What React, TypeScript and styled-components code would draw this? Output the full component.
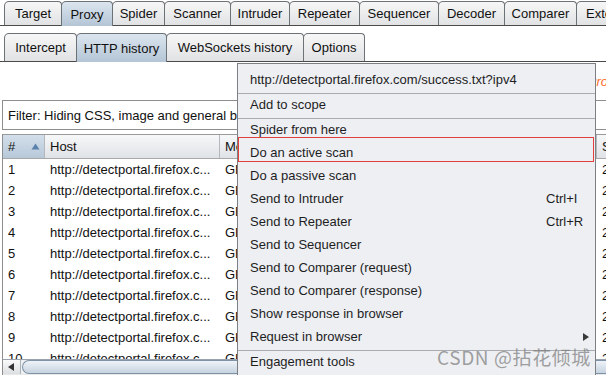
import React from "react";
import styled, { createGlobalStyle, css } from "styled-components";

const Global = createGlobalStyle`
  html, body { margin: 0; padding: 0; background: #ffffff; }
  body { width: 606px; height: 375px; overflow: hidden; font-family: "Liberation Sans", Arial, sans-serif; }
  #root { width: 606px; height: 375px; }
`;

const Window = styled.div`
  position: relative;
  width: 606px;
  height: 375px;
  overflow: hidden;
  background: #ffffff;
  display: flex;
  flex-direction: column;
  font-size: 13px;
  color: #111;
`;

const TabStrip = styled.div<{ $top: number }>`
  display: flex;
  align-items: flex-end;
  padding: ${(p) => p.$top}px 0 0 4px;
  border-bottom: 1px solid #4a4a4a;
  flex: none;
  white-space: nowrap;
`;

const Tab = styled.div<{ $w: number; $h: number; $active?: boolean }>`
  flex: none;
  box-sizing: border-box;
  width: ${(p) => p.$w}px;
  height: ${(p) => p.$h}px;
  margin-right: -1px;
  border: 1px solid #6d7277;
  border-bottom: none;
  border-radius: 5px 4px 0 0;
  display: flex;
  align-items: center;
  justify-content: center;
  font-size: 13px;
  color: #111;
  background: linear-gradient(#f7f7f7, #e1e2e4);
  ${(p) =>
    p.$active &&
    css`
      background: linear-gradient(#dbe5ee, #b4c5d6);
      height: ${p.$h + 1}px;
      margin-bottom: -1px;
      position: relative;
      z-index: 1;
    `}
`;

const Content = styled.div`
  flex: 1;
  display: flex;
  flex-direction: column;
  min-height: 0;
`;

const Banner = styled.div`
  height: 38px;
  flex: none;
  display: flex;
  justify-content: flex-end;
  align-items: center;
  padding-top: 1px;
  box-sizing: border-box;
  margin-right: -2px;
`;

const ProLink = styled.span`
  color: #ff6a2a;
  font-style: italic;
  font-size: 13px;
`;

const FilterBar = styled.div`
  flex: none;
  box-sizing: border-box;
  height: 30px;
  margin-left: 2px;
  margin-right: -10px;
  border: 1px solid #8e8e8e;
  display: flex;
  align-items: center;
  padding-left: 5px;
  white-space: nowrap;
  color: #111;
`;

const Table = styled.div`
  flex: 1;
  min-height: 0;
  margin-top: 4px;
  margin-left: 2px;
  border-left: 1px solid #8e8e8e;
  display: flex;
  flex-direction: column;
`;

const cols = "42px 175px 60px 317px 80px";

const HeaderRow = styled.div`
  flex: none;
  box-sizing: border-box;
  height: 25px;
  display: grid;
  grid-template-columns: ${cols};
  border-top: 1px solid #9a9a9a;
  border-bottom: 1px solid #a8a8a8;
  background: linear-gradient(#f7f8f9, #dfe2e6);
`;

const HeaderCell = styled.div<{ $sorted?: boolean }>`
  box-sizing: border-box;
  display: flex;
  align-items: center;
  justify-content: space-between;
  padding: 0 4px 0 5px;
  border-right: 1px solid #b5b8bc;
  white-space: nowrap;
  overflow: hidden;
  color: #111;
  ${(p) =>
    p.$sorted &&
    css`
      background: linear-gradient(#d3dfea, #b7c8d9);
    `}
`;

const Rows = styled.div`
  flex: 1;
  min-height: 0;
  overflow: hidden;
`;

const Row = styled.div`
  display: grid;
  grid-template-columns: ${cols};
  height: 21px;
  align-items: center;
`;

const Cell = styled.div`
  padding: 0 5px;
  white-space: nowrap;
  overflow: hidden;
  color: #111;
`;

const HScroll = styled.div`
  flex: none;
  height: 14px;
  display: flex;
  border-top: 1px solid #9aa3ad;
  border-bottom: 1px solid #e8e8e8;
  background: #eef0f2;
`;

const ScrollButton = styled.div`
  width: 17px;
  flex: none;
  display: flex;
  align-items: center;
  justify-content: center;
  background: linear-gradient(#fafafa, #dcdfe2);
  border-right: 1px solid #aab2ba;
`;

const Thumb = styled.div`
  flex: 1;
  margin-left: 1px;
  border: 1px solid #7f93a8;
  border-right: none;
  border-radius: 9px 0 0 9px;
  background: linear-gradient(#eef3f8, #c6d3e0);
`;

const Menu = styled.div`
  position: absolute;
  left: 237px;
  top: 63px;
  width: 359px;
  height: 330px;
  box-sizing: border-box;
  border: 1px solid #7c7f84;
  background: #edeff3;
  display: flex;
  flex-direction: column;
  z-index: 5;
`;

const MenuItem = styled.div<{ $focus?: boolean; $header?: boolean }>`
  position: relative;
  flex: none;
  display: flex;
  align-items: center;
  height: 22px;
  line-height: 22px;
  padding: 0 0 1px 12px;
  color: #1e1e1e;
  font-size: 13px;
  white-space: nowrap;
  ${(p) =>
    p.$header &&
    css`
      padding-top: 5px;
    `}
  ${(p) =>
    p.$focus &&
    css`
      &::after {
        content: "";
        position: absolute;
        left: 0;
        right: 1px;
        top: -5px;
        bottom: 3px;
        border: 1px solid #e2403b;
      }
    `}
`;

const Label = styled.span`
  flex: 1;
`;

const Accel = styled.span`
  width: 49px;
  flex: none;
  display: flex;
  align-items: center;
  justify-content: flex-start;
`;

const SubArrow = styled.span`
  margin-left: auto;
  margin-right: 6px;
  width: 0;
  height: 0;
  border-top: 4px solid transparent;
  border-bottom: 4px solid transparent;
  border-left: 6px solid #3a3a3a;
`;

const Separator = styled.div`
  flex: none;
  height: 1px;
  border-bottom: 1px solid #a9abae;
`;

const Watermark = styled.div`
  position: absolute;
  left: 437px;
  top: 344px;
  z-index: 6;
  font-family: "Noto Sans CJK SC", "Liberation Sans", sans-serif;
  font-size: 19px;
  letter-spacing: 0.6px;
  line-height: 26px;
  color: rgba(125, 125, 125, 0.72);
  white-space: nowrap;
`;

const mainTabs: [string, number][] = [
  ["Target", 58],
  ["Proxy", 52],
  ["Spider", 53],
  ["Scanner", 67],
  ["Intruder", 60],
  ["Repeater", 71],
  ["Sequencer", 80],
  ["Decoder", 67],
  ["Comparer", 73],
  ["Extender", 72],
];

const subTabs: [string, number][] = [
  ["Intercept", 73],
  ["HTTP history", 91],
  ["WebSockets history", 138],
  ["Options", 62],
];

type Item = { label: string; accel?: string; sub?: boolean; focus?: boolean };

const group2: Item[] = [
  { label: "Spider from here" },
  { label: "Do an active scan", focus: true },
  { label: "Do a passive scan" },
  { label: "Send to Intruder", accel: "Ctrl+I" },
  { label: "Send to Repeater", accel: "Ctrl+R" },
  { label: "Send to Sequencer" },
  { label: "Send to Comparer (request)" },
  { label: "Send to Comparer (response)" },
  { label: "Show response in browser" },
  { label: "Request in browser", sub: true },
];

const rows = Array.from({ length: 10 }, (_, i) => i + 1);

export default function App() {
  return (
    <>
      <Global />
      <Window>
        <TabStrip $top={1}>
          {mainTabs.map(([t, w]) => (
            <Tab key={t} $w={w} $h={24} $active={t === "Proxy"}>
              {t}
            </Tab>
          ))}
        </TabStrip>
        <TabStrip $top={7}>
          {subTabs.map(([t, w]) => (
            <Tab key={t} $w={w} $h={28} $active={t === "HTTP history"}>
              {t}
            </Tab>
          ))}
        </TabStrip>
        <Content>
          <Banner>
            <ProLink>Burp Pro</ProLink>
          </Banner>
          <FilterBar>Filter: Hiding CSS, image and general binary content</FilterBar>
          <Table>
            <HeaderRow>
              <HeaderCell $sorted>
                <span>#</span>
                <svg width="9" height="7" viewBox="0 0 9 7">
                  <path d="M4.5 0.5 L8.5 6.5 L0.5 6.5 Z" fill="#5b82ad" />
                </svg>
              </HeaderCell>
              <HeaderCell>Host</HeaderCell>
              <HeaderCell>Method</HeaderCell>
              <HeaderCell>URL</HeaderCell>
              <HeaderCell>Status</HeaderCell>
            </HeaderRow>
            <Rows>
              {rows.map((n) => (
                <Row key={n}>
                  <Cell>{n}</Cell>
                  <Cell>http://detectportal.firefox.c...</Cell>
                  <Cell>GET</Cell>
                  <Cell>/success.txt?ipv4</Cell>
                  <Cell>200</Cell>
                </Row>
              ))}
            </Rows>
            <HScroll>
              <ScrollButton>
                <svg width="7" height="8" viewBox="0 0 7 8">
                  <path d="M0 4 L6 0 L6 8 Z" fill="#333" />
                </svg>
              </ScrollButton>
              <Thumb />
            </HScroll>
          </Table>
        </Content>

        <Menu>
          <MenuItem $header>
            <Label>http://detectportal.firefox.com/success.txt?ipv4</Label>
          </MenuItem>
          <Separator />
          <MenuItem>
            <Label>Add to scope</Label>
          </MenuItem>
          <Separator />
          {group2.map((it) => (
            <MenuItem key={it.label} $focus={it.focus}>
              <Label>{it.label}</Label>
              {it.accel && <Accel>{it.accel}</Accel>}
              {it.sub && <SubArrow />}
            </MenuItem>
          ))}
          <Separator />
          <MenuItem>
            <Label>Engagement tools</Label>
          </MenuItem>
        </Menu>
        <Watermark>CSDN @拈花倾城</Watermark>
      </Window>
    </>
  );
}
